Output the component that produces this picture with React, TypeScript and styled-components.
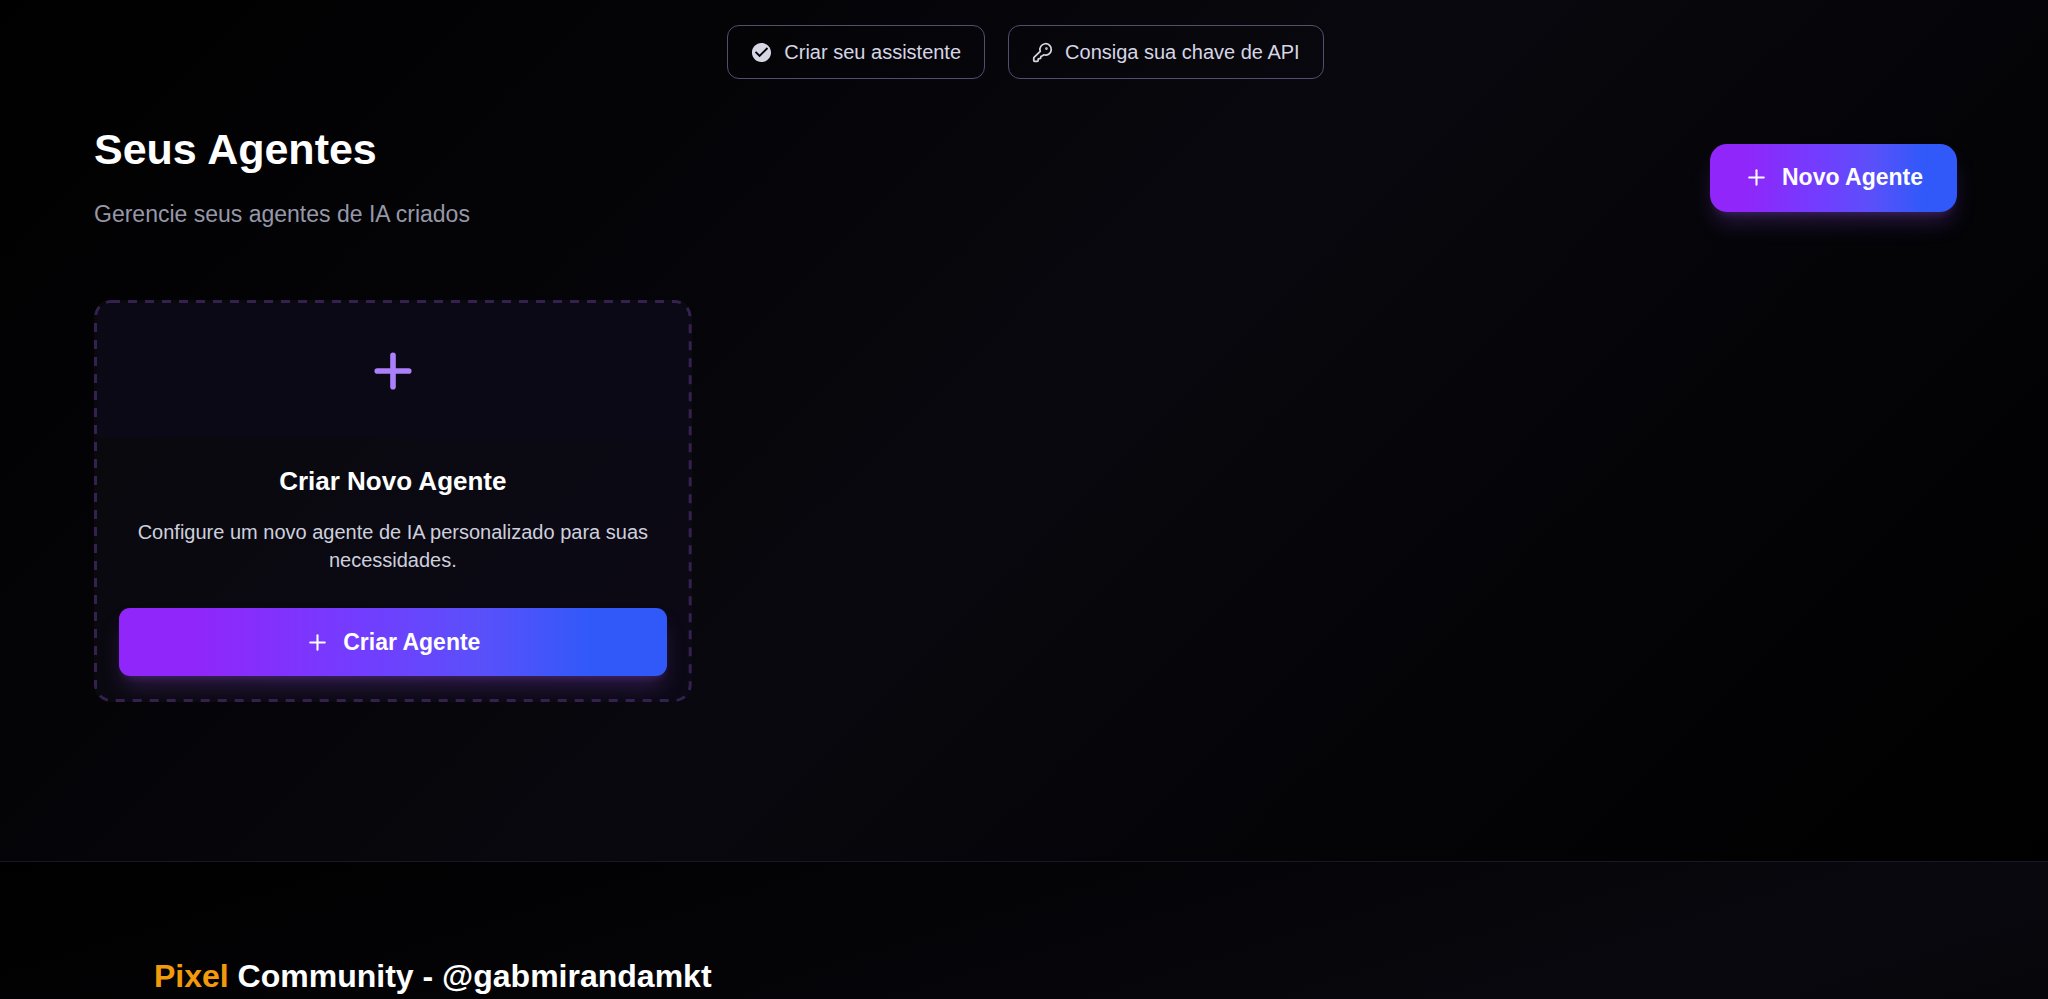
import React from "react";
import styled, { createGlobalStyle } from "styled-components";
import { KeyRound, Plus } from "lucide-react";

const GlobalStyle = createGlobalStyle`
  *, *::before, *::after { box-sizing: border-box; }
  body {
    margin: 0;
    background: #000;
    color: #fff;
    font-family: "Liberation Sans", Arial, Helvetica, sans-serif;
    overflow-x: hidden;
  }
  h1, h2, h3, p { margin: 0; }
`;

const Page = styled.div`
  min-height: 100vh;
  display: flex;
  flex-direction: column;
`;

const Main = styled.main`
  padding: 25px 91px 159px 94px;
  background: linear-gradient(135deg, #000 0%, #08080e 50%, #000 100%);
`;

const Steps = styled.nav`
  display: flex;
  flex-wrap: wrap;
  justify-content: center;
  gap: 23px;
`;

const StepButton = styled.button`
  display: flex;
  align-items: center;
  gap: 12px;
  height: 54px;
  padding: 0 23px;
  border: 1px solid #564b70;
  border-radius: 12px;
  background: transparent;
  color: #d6d6e4;
  font-family: inherit;
  font-size: 20px;
  cursor: pointer;
`;

const Header = styled.header`
  display: flex;
  flex-wrap: wrap;
  align-items: center;
  justify-content: space-between;
  gap: 24px;
  margin: 44px 0 68px;
`;

const Title = styled.h1`
  font-size: 43px;
  line-height: 52px;
  font-weight: 700;
`;

const Subtitle = styled.p`
  margin-top: 21px;
  font-size: 23px;
  line-height: 36px;
  color: #9698a8;
`;

const PrimaryButton = styled.button<{ $block?: boolean }>`
  display: flex;
  align-items: center;
  justify-content: center;
  gap: 13px;
  width: ${({ $block }) => ($block ? "100%" : "auto")};
  height: 68px;
  padding: 0 34px;
  border: 0;
  border-radius: ${({ $block }) => ($block ? 11 : 17)}px;
  background: linear-gradient(90deg, #9026fa 14%, #753bff 42%, #5a50fa 66%, #3159fa 86%);
  box-shadow: 0 14px 21px -4px rgba(150, 80, 230, 0.25), 0 6px 9px -5px rgba(150, 80, 230, 0.25);
  color: #fff;
  font-family: inherit;
  font-size: 23px;
  font-weight: 700;
  cursor: pointer;
`;

const Grid = styled.section`
  display: grid;
  grid-template-columns: repeat(3, minmax(0, 1fr));
  gap: 35px;

  @media (max-width: 1100px) {
    grid-template-columns: minmax(0, 1fr);
  }
`;

const Card = styled.article`
  position: relative;
  padding: 3px;
  border-radius: 17px;
  background: linear-gradient(135deg, #09090c 0%, #0c0916 100%);
  overflow: hidden;
`;

const DashedOutline = styled.svg`
  position: absolute;
  inset: 0;
  width: 100%;
  height: 100%;
  pointer-events: none;

  rect {
    width: calc(100% - 3px);
    height: calc(100% - 3px);
  }
`;

const CardTop = styled.div`
  display: flex;
  align-items: center;
  justify-content: center;
  height: 135px;
  border-radius: 14px 14px 0 0;
  background: #0b0915;
  color: #ac80fb;
`;

const CardBody = styled.div`
  padding: 26px 22px 23px;
  text-align: center;
`;

const CardTitle = styled.h2`
  font-size: 26px;
  line-height: 34px;
`;

const CardText = styled.p`
  margin: 20px 0 34px;
  font-size: 20px;
  line-height: 28px;
  color: #ced0de;
`;

const Footer = styled.footer`
  flex: 1;
  padding: 91px 154px 0;
  border-top: 1px solid #1a1826;
  background: linear-gradient(to bottom right, #000 0%, #08080e 50%, #000 100%) 0 0 / 100% 635px no-repeat;
`;

const FooterTitle = styled.h2`
  font-size: 32px;
  line-height: 46px;
`;

const Brand = styled.span`
  color: #f39a0c;
`;

const CheckIcon = () => (
  <svg width="21" height="21" viewBox="1 1 22 22" fill="currentColor" aria-hidden="true">
    <path d="M12 2C6.480 2 2 6.480 2 12s4.480 10 10 10 10-4.480 10-10S17.520 2 12 2Zm-2 15-5-5 1.410-1.410L10 14.170l7.590-7.590L19 8l-9 9Z" />
  </svg>
);

export default function App() {
  return (
    <>
      <GlobalStyle />
      <Page>
        <Main>
          <Steps>
            <StepButton type="button">
              <CheckIcon />
              Criar seu assistente
            </StepButton>
            <StepButton type="button">
              <KeyRound size={21} aria-hidden="true" />
              Consiga sua chave de API
            </StepButton>
          </Steps>
          <Header>
            <div>
              <Title>Seus Agentes</Title>
              <Subtitle>Gerencie seus agentes de IA criados</Subtitle>
            </div>
            <PrimaryButton type="button">
              <Plus size={25} strokeWidth={2} aria-hidden="true" />
              Novo Agente
            </PrimaryButton>
          </Header>
          <Grid>
            <Card>
              <CardTop>
                <Plus size={54} strokeWidth={2.5} aria-hidden="true" />
              </CardTop>
              <CardBody>
                <CardTitle>Criar Novo Agente</CardTitle>
                <CardText>Configure um novo agente de IA personalizado para suas necessidades.</CardText>
                <PrimaryButton type="button" $block>
                  <Plus size={25} strokeWidth={2} aria-hidden="true" />
                  Criar Agente
                </PrimaryButton>
              </CardBody>
              <DashedOutline aria-hidden="true">
                <rect x="1.5" y="1.5" rx="15.5" fill="none" stroke="#34214f" strokeWidth="3" strokeDasharray="9 8" />
              </DashedOutline>
            </Card>
          </Grid>
        </Main>
        <Footer>
          <FooterTitle>
            <Brand>Pixel</Brand> Community - @gabmirandamkt
          </FooterTitle>
        </Footer>
      </Page>
    </>
  );
}
